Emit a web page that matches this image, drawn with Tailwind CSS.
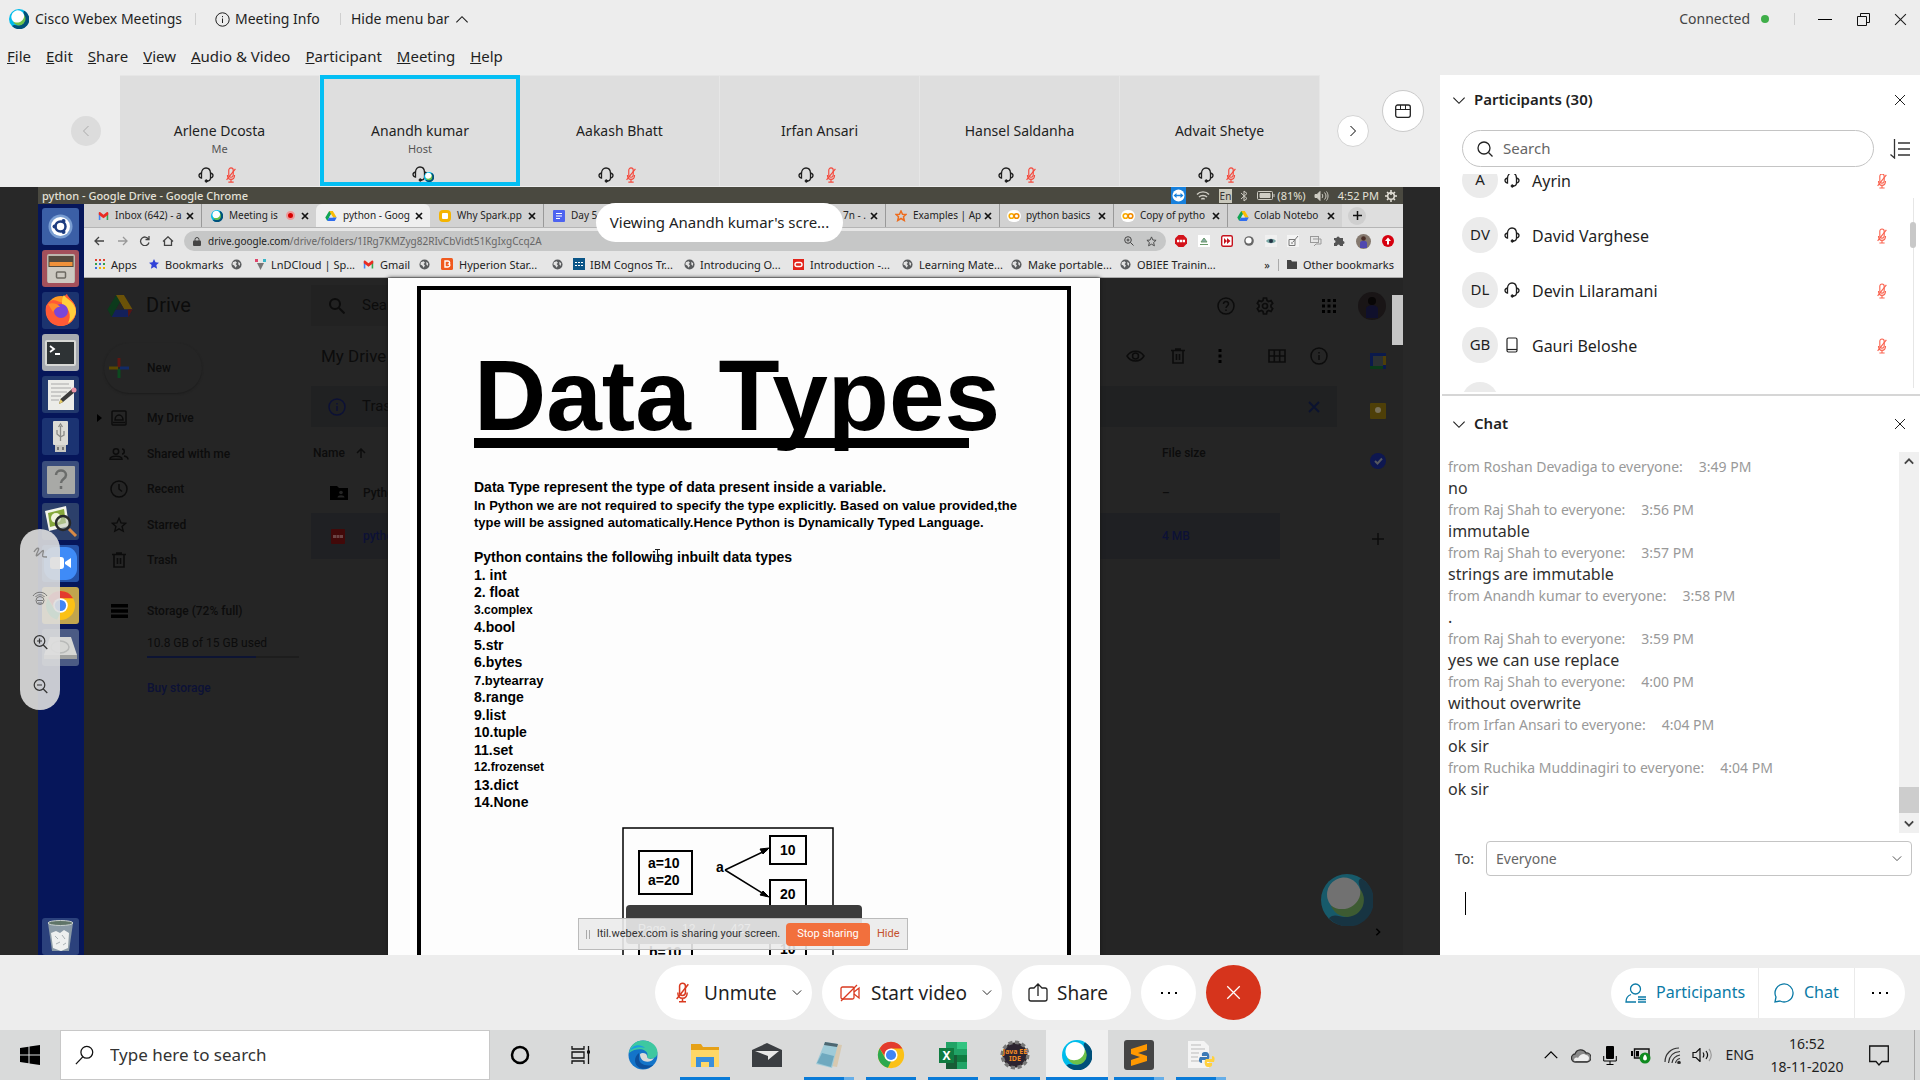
<!DOCTYPE html>
<html lang="en">
<head>
<meta charset="utf-8">
<title>Cisco Webex Meetings</title>
<script src="https://cdn.jsdelivr.net/npm/@tailwindcss/browser@4"></script>
</head>
<body class="flex h-screen flex-col overflow-hidden bg-[#ededed] font-['Noto_Sans','Open_Sans',sans-serif] text-sm text-[#1f1f1f]">

<!-- Shared symbols -->
<svg class="hidden" aria-hidden="true">
  <symbol id="webex" viewBox="0 0 40 40">
    <circle cx="20" cy="20" r="20" fill="#00bceb"/>
    <path d="M31 3.300A20 20 0 1 1 6 34C10 30 14 33 18 33C28 33 33 25 31 14C30 9 27 5 31 3.300Z" fill="#00507a"/>
    <circle cx="20" cy="20" r="13" fill="#6cc04a"/>
    <path d="M30 11.700A13 13 0 1 0 7.600 24C12 28 20 28 25 24C29 21 31 16 30 11.700Z" fill="#fff"/>
  </symbol>
  <symbol id="headset" viewBox="0 0 16 16" fill="none" stroke="currentColor">
    <path d="M3.500 6.500C3.500 3 5.500 1 8 1s4.500 2 4.500 5.500M3.500 6C1.500 6.500 1 7.500 1 8.500s.5 2 2.500 2.500zM12.500 6c2 .5 2.500 1.500 2.500 2.500s-.5 2-2.500 2.500zM12.500 11c0 2-1.500 3-3.500 3" stroke-width="1.300"/>
    <circle cx="8.300" cy="14" r="1.200" fill="currentColor"/>
  </symbol>
  <symbol id="micoff" viewBox="0 0 16 18" fill="none" stroke="currentColor" stroke-width="1.300">
    <rect x="5.500" y="1" width="5" height="10.500" rx="2.500"/>
    <path d="M4 9c0 3 1.500 5 4 5s4-2 4-5M8 14v3M5 17h6M13 2L3 14.500"/>
  </symbol>
  <symbol id="globe" viewBox="0 0 12 12">
    <circle cx="6" cy="6" r="5.500" fill="#5a5c5e"/>
    <path d="M2 3.500l3-1 1.500 1.500L5 5.500 6.500 7 5 9.500 3.500 7 1.500 6zM8 3l2 1.500-.5 3L8 6z" fill="#e3e3e3"/>
  </symbol>
  <symbol id="gmail" viewBox="0 0 14 12">
    <path d="M1 11V2l2 1.500V11z" fill="#4285f4"/><path d="M13 11V2l-2 1.500V11z" fill="#34a853"/>
    <path d="M1 2c0-1 1-1.500 2-.8l4 3.300 4-3.300c1-.7 2-.2 2 .8v2.500L7 9 1 4.500z" fill="#ea2c22"/>
  </symbol>
  <symbol id="gdrive" viewBox="0 0 32 28">
    <path d="M11 0h10L10.500 19 5.500 28 0 18.500z" fill="#11a453"/><path d="M11 0h10l11 18.500H21.500z" fill="#fbbc04"/>
    <path d="M5.500 28L10.500 18.500H32L26.500 28z" fill="#2f6df0"/><path d="M16 9.200l5.400 9.300H10.600z" fill="#e5e5e5"/>
  </symbol>
  <symbol id="gdrive-dim" viewBox="0 0 32 28">
    <path d="M11 0h10L10.500 19 5.500 28 0 18.500z" fill="#0c3a1c"/><path d="M11 0h10l11 18.500H21.500z" fill="#6b5208"/>
    <path d="M5.500 28L10.500 18.500H32L26.500 28z" fill="#13205a"/><path d="M26 18.500h6L26.500 28z" fill="#571512"/><path d="M16 9.200l5.400 9.300H10.600z" fill="#252525"/>
  </symbol>
  <symbol id="chrome" viewBox="0 0 32 32">
    <circle cx="16" cy="16" r="15" fill="#fbc116"/><path d="M3 8.500A15 15 0 0 1 29 8.500H16L10 19z" fill="#e33b2e"/>
    <path d="M3 8.500L9.600 20 16 23l-3.500 7.600A15 15 0 0 1 3 8.500z" fill="#2da94f"/>
    <circle cx="16" cy="16" r="7.500" fill="#fff"/><circle cx="16" cy="16" r="5.800" fill="#4285f4"/>
  </symbol>
  <symbol id="cross" viewBox="0 0 12 12" fill="none" stroke="currentColor"><path d="M1 1l10 10M11 1L1 11"/></symbol>
  <symbol id="cross-bold" viewBox="0 0 8 8" fill="none" stroke="#111" stroke-width="1.700"><path d="M1 1l6 6M7 1L1 7"/></symbol>
  <symbol id="down" viewBox="0 0 12 8" fill="none" stroke="currentColor"><path d="M1 1.500l5 5 5-5"/></symbol>
  <symbol id="down-bold" viewBox="0 0 12 8" fill="none" stroke="currentColor" stroke-width="2.200"><path d="M1 1.500l5 5 5-5"/></symbol>
  <symbol id="colab" viewBox="0 0 14 12"><rect width="14" height="12" rx="6" fill="#fff"/><circle cx="4.500" cy="6" r="2.300" fill="none" stroke="#f9ab00" stroke-width="1.600"/><circle cx="9.500" cy="6" r="2.300" fill="none" stroke="#f28b00" stroke-width="1.600"/></symbol>
</svg>

<!-- Title bar -->
<header class="flex h-[38px] shrink-0 items-center pl-[9px] pr-3">
  <svg class="size-5"><use href="#webex"/></svg>
  <span class="ml-[6px] w-[154px] whitespace-nowrap">Cisco Webex Meetings</span>
  <span class="ml-[6px] h-3 w-px bg-[#cfcfcf]"></span>
  <button class="ml-[19px] flex w-[106px] items-center gap-[5px] whitespace-nowrap">
    <svg class="size-[15px] shrink-0" viewBox="0 0 15 15" fill="none" stroke="currentColor"><circle cx="7.500" cy="7.500" r="6.700"/><path d="M7.500 6.500V11M7.500 4v1.200"/></svg>Meeting Info</button>
  <span class="ml-[19px] h-3 w-px bg-[#cfcfcf]"></span>
  <button class="ml-[10px] flex items-center gap-[6px] whitespace-nowrap">Hide menu bar
    <svg class="h-[9px] w-[14px] rotate-180"><use href="#down"/></svg></button>
  <span class="ml-auto text-[#444]">Connected</span>
  <span class="ml-[11px] size-2 rounded-full bg-[#3fae49]"></span>
  <span class="ml-[25px] h-3 w-px bg-[#cfcfcf]"></span>
  <button aria-label="Minimize" class="ml-[23px] flex h-5 w-[14px] items-center"><span class="h-px w-full bg-black"></span></button>
  <button aria-label="Restore" class="ml-[25px]"><svg class="size-[13px]" viewBox="0 0 13 13" fill="none" stroke="#111"><path d="M.5 3.500h9v9h-9zM3.500 3.500v-3h9v9h-3"/></svg></button>
  <button aria-label="Close window" class="ml-[24px] mr-px"><svg class="size-[13px]"><use href="#cross"/></svg></button>
</header>

<!-- Menu bar -->
<nav class="flex h-[37px] shrink-0 items-center gap-[15px] pl-[7px] text-[15px]">
  <button><u>F</u>ile</button><button><u>E</u>dit</button><button><u>S</u>hare</button><button><u>V</u>iew</button>
  <button><u>A</u>udio &amp; Video</button><button><u>P</u>articipant</button><button><u>M</u>eeting</button><button><u>H</u>elp</button>
</nav>

<main class="flex min-h-0 flex-1">
  <section class="flex min-w-0 flex-1 flex-col">

    <!-- Film strip -->
    <div class="flex h-28 shrink-0 pb-px">
      <div class="flex w-[120px] shrink-0 items-center pl-[71px]">
        <button aria-label="Previous" class="flex size-[30px] items-center justify-center rounded-full bg-[#dcdcdc] text-[#aaa]"><svg class="h-2 w-3 rotate-90"><use href="#down"/></svg></button>
      </div>
      <ul class="flex text-center">
        <li class="flex w-[200px] flex-col items-center border-t border-r border-[#e6e6e6] bg-[#dedede] pt-[45px]">
          <span class="leading-5">Arlene Dcosta</span><span class="h-5 text-[11px] leading-4 text-[#555]">Me</span>
          <span class="flex h-[22px] items-end gap-[9px] pr-[3px]"><svg class="size-4"><use href="#headset"/></svg><svg class="h-4 w-4 text-[#f5493c]"><use href="#micoff"/></svg></span></li>
        <li class="flex w-[200px] flex-col items-center border-4 border-[#04bff4] bg-[#dedede] pt-[42px]">
          <span class="leading-5">Anandh kumar</span><span class="h-5 text-[11px] leading-4 text-[#555]">Host</span>
          <span class="relative flex h-[22px] shrink-0 items-end"><svg class="size-4"><use href="#headset"/></svg><svg class="absolute -right-[6px] bottom-0 size-[10px]"><use href="#webex"/></svg></span></li>
        <li class="flex w-[200px] flex-col items-center border-t border-r border-[#e6e6e6] bg-[#dedede] pt-[45px]">
          <span class="h-10 leading-5">Aakash Bhatt</span>
          <span class="flex h-[22px] items-end gap-[9px] pr-[3px]"><svg class="size-4"><use href="#headset"/></svg><svg class="h-4 w-4 text-[#f5493c]"><use href="#micoff"/></svg></span></li>
        <li class="flex w-[200px] flex-col items-center border-t border-r border-[#e6e6e6] bg-[#dedede] pt-[45px]">
          <span class="h-10 leading-5">Irfan Ansari</span>
          <span class="flex h-[22px] items-end gap-[9px] pr-[3px]"><svg class="size-4"><use href="#headset"/></svg><svg class="h-4 w-4 text-[#f5493c]"><use href="#micoff"/></svg></span></li>
        <li class="flex w-[200px] flex-col items-center border-t border-r border-[#e6e6e6] bg-[#dedede] pt-[45px]">
          <span class="h-10 leading-5">Hansel Saldanha</span>
          <span class="flex h-[22px] items-end gap-[9px] pr-[3px]"><svg class="size-4"><use href="#headset"/></svg><svg class="h-4 w-4 text-[#f5493c]"><use href="#micoff"/></svg></span></li>
        <li class="flex w-[200px] flex-col items-center border-t border-r border-[#e6e6e6] bg-[#dedede] pt-[45px]">
          <span class="h-10 leading-5">Advait Shetye</span>
          <span class="flex h-[22px] items-end gap-[9px] pr-[3px]"><svg class="size-4"><use href="#headset"/></svg><svg class="h-4 w-4 text-[#f5493c]"><use href="#micoff"/></svg></span></li>
      </ul>
      <button aria-label="Next" class="ml-[17px] flex size-8 items-center justify-center self-center rounded-full border border-[#d4d4d4] bg-white text-black"><svg class="h-2 w-3 -rotate-90"><use href="#down"/></svg></button>
      <button aria-label="Layout" class="mt-[15px] ml-[13px] flex size-[42px] items-center justify-center rounded-full border border-[#cacaca] bg-white">
        <svg class="h-[14px] w-4" viewBox="0 0 16 14" fill="none" stroke="#222"><rect x=".7" y="1" width="14.600" height="12.300" rx="2" stroke-width="1.300"/><path d="M1 5.500h14M5.500 1v4.500M10.500 1v4.500"/></svg></button>
    </div>

    <!-- Shared screen -->
    <div class="relative flex min-h-0 flex-1 bg-[#282828] pr-[37px] pl-[38px]">
      <div class="flex min-w-0 flex-1 flex-col overflow-hidden">

        <div class="flex h-[17px] shrink-0 items-center bg-[#4a4940] pr-[6px] pl-1 text-[11px] text-[#e4e1d8]">
          <span class="font-medium whitespace-nowrap">python - Google Drive - Google Chrome</span>
          <svg class="ml-auto h-[17px] w-[15px]" viewBox="0 0 15 17"><rect width="15" height="17" fill="#1780dc"/><circle cx="7.500" cy="8.500" r="6" fill="#fff"/><path d="M2.500 8.500L5.500 6v1.700h4V6l3 2.500-3 2.500V9.300h-4V11z" fill="#1780dc"/></svg>
          <svg class="ml-[10px] h-3 w-[14px]" viewBox="0 0 14 12" fill="none" stroke="#cfcdc4" stroke-width="1.400"><path d="M1 4.500C4 1 10 1 13 4.500M3 7c2-2 6-2 8 0M5.300 9.200c1-.8 2.400-.8 3.400 0"/></svg>
          <span class="ml-[9px] bg-[#c9c8bc] px-px text-[10px] leading-[14px] text-[#333]">En</span>
          <svg class="ml-2 h-3 w-2" viewBox="0 0 8 12" fill="none" stroke="#cfcdc4"><path d="M1 3l6 5.500L4 11V1l3 2.500L1 9"/></svg>
          <svg class="ml-[9px] h-[9px] w-[18px]" viewBox="0 0 18 9" fill="none" stroke="#cfcdc4"><rect x=".5" y=".5" width="15" height="8" rx="1"/><path d="M3 2.500h10v4H3z" fill="#cfcdc4"/><path d="M17 3v3"/></svg>
          <span class="ml-[2px]">(81%)</span>
          <svg class="ml-2 h-[10px] w-[15px]" viewBox="0 0 15 10" fill="none" stroke="#cfcdc4"><path d="M1 3.500h2l3-3v9l-3-3H1z" fill="#cfcdc4"/><path d="M8 3c1 1 1 3 0 4M10.500 1.500c2 2 2 5 0 7M12.500.5c2 2.500 2 6.500 0 9"/></svg>
          <span class="ml-[9px]">4:52 PM</span>
          <svg class="ml-[6px] size-3" viewBox="0 0 12 12" fill="none" stroke="#e4e1d8"><circle cx="6" cy="6" r="3.300" stroke-width="1.500"/><path d="M6 0v5M6 12v-2M0 6h2M12 6h-2M2 2l1.300 1.300M10 2L8.700 3.300M2 10l1.300-1.300M10 10L8.700 8.700" stroke-width="1.500"/></svg>
        </div>

        <div class="flex min-h-0 flex-1">
          <!-- Launcher -->
          <aside class="flex w-[46px] shrink-0 flex-col justify-between bg-[#06165a] pt-1 pl-1">
            <div class="flex h-[458px] flex-col justify-between">
              <svg class="size-[37px]" viewBox="0 0 37 37"><rect width="37" height="37" rx="3" fill="#3b5fa6"/><circle cx="18.500" cy="18.500" r="12" fill="#7a9ed2"/><circle cx="18.500" cy="18.500" r="9.500" fill="#fff"/><circle cx="18.500" cy="18.500" r="5" fill="none" stroke="#1d3c80" stroke-width="2.500"/><circle cx="12.500" cy="18.500" r="2" fill="#1d3c80"/><circle cx="21.500" cy="13" r="2" fill="#1d3c80"/><circle cx="21.500" cy="24" r="2" fill="#1d3c80"/></svg>
              <svg class="size-[37px]" viewBox="0 0 37 37"><rect width="37" height="37" rx="3" fill="#a3505b"/><rect x="5" y="4" width="28" height="29" rx="2" fill="#bcb6ac"/><rect x="6.500" y="6" width="25" height="11" fill="#544a3e"/><rect x="7.500" y="12" width="23" height="4" fill="#f0913a"/><rect x="6" y="17" width="26" height="16" rx="1" fill="#cdc9c1"/><rect x="14.500" y="22" width="9" height="6" rx="1" fill="none" stroke="#6d6962" stroke-width="1.500"/></svg>
              <svg class="size-[37px]" viewBox="0 0 37 37"><rect width="37" height="37" rx="3" fill="#1b336f"/><circle cx="19" cy="19" r="15" fill="#ff9a23"/><path d="M4 14c2-3 3-5 7-6 4 0 7 3 11 3-2-3 0-7 3-9 1 4 9 8 9 17 0 10-9 16-17 15C8 33 2 25 4 14z" fill="#ff5a36"/><path d="M22 3c2 4 12 7 12 17-1 5-4 9-8 11 4-7 1-16-6-19 0-4 0-6 2-9z" fill="#ffcf3c"/><circle cx="19" cy="19" r="7" fill="#7a46d8"/><path d="M6 12c5-2 10 0 12 3-4 0-5 2-7 5z" fill="#ff8a2a"/></svg>
              <svg class="size-[37px]" viewBox="0 0 37 37"><rect width="37" height="37" rx="3" fill="#a6aab0"/><rect x="3" y="6" width="31" height="26" rx="2" fill="#d7d8d5"/><rect x="5" y="8" width="27" height="22" fill="#2e3335"/><path d="M8 12l4 3-4 3M13 20h5" fill="none" stroke="#fff" stroke-width="1.800"/></svg>
              <svg class="size-[37px]" viewBox="0 0 37 37"><rect width="37" height="37" rx="3" fill="#22396d"/><rect x="6" y="4" width="26" height="30" fill="#ecece8"/><path d="M9 8h18M9 12h20M9 16h16M9 20h10M9 24h8" stroke="#a8a8a8"/><path d="M17 28l1.500-5L30 13l3 3-12 10z" fill="#3b3b3b"/><path d="M17 28l1.500-5 2.500 3z" fill="#e9cf6a"/><circle cx="32" cy="14" r="2.500" fill="#e792a4"/></svg>
              <svg class="size-[37px]" viewBox="0 0 37 37"><rect width="37" height="37" rx="3" fill="#1b3372"/><rect x="11" y="3" width="15" height="24" rx="1" fill="#dddcd6"/><rect x="13" y="27" width="11" height="7" fill="#c7c6c0"/><path d="M18.500 23V8M15 12v4l3.500 3 3.500-2v-4M16.500 9l2-3 2 3" fill="none" stroke="#8b8b88" stroke-width="1.300"/><path d="M15 29h2v3h-2zM20 29h2v3h-2z" fill="#777"/></svg>
              <svg class="size-[37px]" viewBox="0 0 37 37"><rect width="37" height="37" rx="3" fill="#3a4d7c"/><rect x="5" y="5" width="28" height="28" rx="1" fill="#a8a9a6"/><path d="M14 14c0-6 10-6 10 0 0 4-5 4-5 8M19 25v3" fill="none" stroke="#6b6d6b" stroke-width="2.500"/></svg>
              <svg class="size-[37px]" viewBox="0 0 37 37"><rect width="37" height="37" rx="3" fill="#2c406b"/><path d="M3 8l21-5 3 20-20 5z" fill="#f3f4ea"/><path d="M6 10l16-4 2 14-16 4z" fill="#86a83c"/><circle cx="14" cy="15" r="5" fill="#f1f3dc"/><circle cx="21" cy="20" r="7" fill="#c7d0bb" fill-opacity=".6" stroke="#26292a" stroke-width="2.500"/><path d="M27 26l7 7" stroke="#d98a45" stroke-width="3"/></svg>
              <svg class="size-[37px]" viewBox="0 0 37 37"><rect width="37" height="37" rx="3" fill="#2552a6"/><rect x="2" y="2" width="33" height="33" rx="11" fill="#3f8bf7"/><rect x="8" y="12" width="14" height="12" rx="3" fill="#fff"/><path d="M23 17l6-4v10l-6-4z" fill="#fff"/></svg>
              <svg class="size-[37px]" viewBox="0 0 37 37"><rect width="37" height="37" rx="3" fill="#c1a54e"/><use href="#chrome" x="3" y="3" width="31" height="31"/></svg>
              <svg class="size-[37px]" viewBox="0 0 37 37"><rect width="37" height="37" rx="3" fill="#4b5b84"/><path d="M8 8h21l6 18H2z" fill="#d6d7d4"/><path d="M2 26h33v4H2z" fill="#9fa19f"/><ellipse cx="18" cy="18" rx="9" ry="6" fill="none" stroke="#b8bab8" stroke-width="1.500"/></svg>
            </div>
            <svg class="size-[37px]" viewBox="0 0 37 37"><rect width="37" height="37" rx="3" fill="#2b417c"/><path d="M6 5h25l-4 28H10z" fill="#8a9aa6"/><ellipse cx="18.500" cy="5" rx="12.500" ry="2.500" fill="#5f7468" stroke="#c9d0cf"/><path d="M9 15l5-2 4 2 4-3 5 3-1 15-7 3-8-3z" fill="#eef0ef"/><path d="M13 18l3 3M20 17l3 4M14 26l4-2M21 27l3-2" stroke="#a9b1b4"/></svg>
          </aside>

          <!-- Browser -->
          <div class="flex min-w-0 flex-1 flex-col">
            <div class="flex h-[23px] shrink-0 items-stretch bg-[#d2d2d2] pl-1 text-[10px] whitespace-nowrap text-[#222]">
              <div class="flex w-[114px] shrink-0 items-center border-r border-[#999] pr-[7px] pl-[10px]"><svg class="h-3 w-[11px] shrink-0"><use href="#gmail"/></svg><span class="ml-[6px] flex-1">Inbox (642) - a</span><svg class="size-2 shrink-0"><use href="#cross-bold"/></svg></div>
              <div class="flex w-[114px] shrink-0 items-center pr-[7px] pl-[9px]"><svg class="size-3 shrink-0"><use href="#webex"/></svg><span class="ml-[6px] flex-1">Meeting is</span><span class="size-[9px] rounded-full border-2 border-[#e99] bg-[#d60000]"></span><svg class="ml-[6px] size-2 shrink-0"><use href="#cross-bold"/></svg></div>
              <div class="flex w-[114px] shrink-0 items-center rounded-t-md bg-[#efefef] pr-[7px] pl-[9px]"><svg class="h-[10px] w-3 shrink-0"><use href="#gdrive"/></svg><span class="ml-[6px] flex-1">python - Goog</span><svg class="size-2 shrink-0"><use href="#cross-bold"/></svg></div>
              <div class="flex w-[114px] shrink-0 items-center border-r border-[#999] pr-[7px] pl-[9px]"><span class="size-3 shrink-0 rounded-sm border-[3px] border-[#f4b400] bg-white"></span><span class="ml-[6px] flex-1">Why Spark.pp</span><svg class="size-2 shrink-0"><use href="#cross-bold"/></svg></div>
              <div class="flex w-[114px] shrink-0 items-center border-r border-[#999] pr-[7px] pl-[9px]"><svg class="size-3 shrink-0" viewBox="0 0 12 12"><rect width="12" height="12" rx="1" fill="#4d63f0"/><path d="M3 3.500h6M3 6h6M3 8.500h4" stroke="#fff"/></svg><span class="ml-[6px] flex-1">Day 5</span><svg class="size-2 shrink-0"><use href="#cross-bold"/></svg></div>
              <div class="w-[114px] shrink-0 border-r border-[#999]"></div>
              <div class="flex w-[114px] shrink-0 items-center border-r border-[#999] pr-[7px] pl-[9px]"><span class="mr-1 flex-1 text-right">7n - .</span><svg class="size-2 shrink-0"><use href="#cross-bold"/></svg></div>
              <div class="flex w-[114px] shrink-0 items-center border-r border-[#999] pr-[7px] pl-[9px]"><svg class="size-3 shrink-0" viewBox="0 0 12 12"><path d="M6 1l1.500 3.200 3.500.3-2.500 2.300.8 3.700L6 8.500l-3.300 2 .8-3.700L1 4.500l3.500-.3z" fill="none" stroke="#ee6c1d" stroke-width="1.500"/></svg><span class="ml-[6px] flex-1">Examples | Ap</span><svg class="size-2 shrink-0"><use href="#cross-bold"/></svg></div>
              <div class="flex w-[114px] shrink-0 items-center border-r border-[#999] pr-[7px] pl-[7px]"><svg class="h-3 w-[14px] shrink-0"><use href="#colab"/></svg><span class="ml-[5px] flex-1">python basics</span><svg class="size-2 shrink-0"><use href="#cross-bold"/></svg></div>
              <div class="flex w-[114px] shrink-0 items-center border-r border-[#999] pr-[7px] pl-[7px]"><svg class="h-3 w-[14px] shrink-0"><use href="#colab"/></svg><span class="ml-[5px] flex-1">Copy of pytho</span><svg class="size-2 shrink-0"><use href="#cross-bold"/></svg></div>
              <div class="flex w-[114px] shrink-0 items-center pr-[7px] pl-[9px]"><svg class="h-[10px] w-3 shrink-0"><use href="#gdrive"/></svg><span class="ml-[5px] flex-1">Colab Notebo</span><svg class="size-2 shrink-0"><use href="#cross-bold"/></svg></div>
              <div class="flex flex-1 items-center bg-[#dedede] pl-[6px]"><button aria-label="New tab" class="flex size-[18px] items-center justify-center rounded-full bg-[#cfcfcf]"><svg class="size-[9px]" viewBox="0 0 9 9" stroke="#111" stroke-width="1.500"><path d="M0 4.500h9M4.500 0v9"/></svg></button></div>
            </div>

            <div class="flex h-[27px] shrink-0 items-center border-t border-[#b5b5b5] bg-[#e6e6e6] pr-[9px] pl-[10px]">
              <svg class="h-[10px] w-[82px] shrink-0" viewBox="0 0 82 10" fill="none" stroke="#444" stroke-width="1.300"><path d="M10 5H1M5 1L1 5l4 4"/><path d="M24 5h9M29 1l4 4-4 4" stroke="#999"/><path d="M54.500 3A4.300 4.300 0 1 0 55 6.500M55 0v3.500h-3.500M69 5.500L74 .800l5 4.700M70.500 4.500V9.500h7V4.500"/></svg>
              <div class="ml-2 flex h-5 flex-1 items-center rounded-full bg-[#c6c7c7] px-[9px] text-[10px]">
                <svg class="h-[9px] w-2" viewBox="0 0 8 9"><rect y="3.500" width="8" height="5.500" rx="1" fill="#444"/><path d="M2 4V2.500a2 2 0 0 1 4 0V4" fill="none" stroke="#444"/></svg>
                <span class="ml-[7px] text-[#222]">drive.google.com</span><span class="text-[#666]">/drive/folders/1IRg7KMZyg82RIvCbVidt51KgIxgCcq2A</span>
                <svg class="ml-auto size-[10px]" viewBox="0 0 10 10" fill="none" stroke="#444"><circle cx="4" cy="4" r="3.300"/><path d="M6.500 6.500L9.500 9.500M2.500 4h3M4 2.500v3"/></svg>
                <svg class="ml-3 size-[11px]" viewBox="0 0 12 12" fill="none" stroke="#444"><path d="M6 1l1.500 3.400 3.500.3-2.700 2.400.9 3.600L6 8.900l-3.200 1.800.9-3.600L1 4.700l3.500-.3z"/></svg>
              </div>
              <div class="ml-[9px] flex w-[219px] shrink-0 items-center justify-between">
                <svg class="size-3" viewBox="0 0 12 12"><path d="M3.500 0h5L12 3.500v5L8.500 12h-5L0 8.500v-5z" fill="#d3131b"/><path d="M2 6h8" stroke="#fff" stroke-width="2.500" stroke-dasharray="2.300 .6"/></svg>
                <svg class="size-3" viewBox="0 0 12 12"><rect width="12" height="12" fill="#fff"/><path d="M2 9.500h8M3 7l3-4 3 4z" stroke="#6a9a6a" fill="#8aa"/></svg>
                <svg class="size-3" viewBox="0 0 12 12"><rect x=".7" y=".7" width="10.600" height="10.600" rx="1.500" fill="#fff" stroke="#c5121d" stroke-width="1.400"/><path d="M3 3l3 3-3 3zM6 3l3.500 3L6 9z" fill="#c5121d"/></svg>
                <svg class="size-[10px]" viewBox="0 0 10 10"><circle cx="5" cy="5" r="4.800" fill="#666"/><circle cx="4.600" cy="4.600" r="3" fill="#fff"/></svg>
                <svg class="size-3" viewBox="0 0 12 12"><rect width="12" height="12" fill="#f0f0f0"/><path d="M1 6c2-3 8-3 10 0-2 3-8 3-10 0z" fill="#7aa8a6"/><circle cx="6" cy="6" r="2" fill="#234"/></svg>
                <svg class="size-3" viewBox="0 0 12 12" fill="none" stroke="#777"><rect width="12" height="12" fill="#f4f4f4" stroke="none"/><path d="M2 4.500h6v6H2zM6 7l5-6M4 8h2"/></svg>
                <svg class="size-3" viewBox="0 0 12 12" fill="none" stroke="#999"><rect x=".5" y="1.500" width="8" height="6"/><path d="M3 4h8v5H6l-2 2"/></svg>
                <svg class="size-3" viewBox="0 0 12 12"><path d="M1 3h2.500a1.600 1.600 0 1 1 3.200 0H10v3a1.500 1.500 0 1 1 0 3v2H7a1.500 1.500 0 1 0-3 0H1V8a1.500 1.500 0 1 0 0-3z" fill="#555"/></svg>
                <svg class="size-[15px]" viewBox="0 0 15 15"><circle cx="7.500" cy="7.500" r="7.500" fill="#85796f"/><circle cx="7.500" cy="4.500" r="2.300" fill="#4a2e28"/><path d="M4 14V9c0-3 7-3 7 0v5z" fill="#5048b0"/></svg>
                <svg class="size-3" viewBox="0 0 12 12"><circle cx="6" cy="6" r="6" fill="#d6000f"/><path d="M6 2.500L9 6H7v3.500H5V6H3z" fill="#fff"/></svg>
              </div>
            </div>

            <div class="flex h-6 shrink-0 items-center border-b border-[#aaa] bg-[#e6e6e6] pr-[9px] pb-[2px] pl-[11px] text-[11px] whitespace-nowrap text-[#222]">
              <a href="#" class="flex w-[54px] shrink-0 items-center gap-[6px]"><svg class="size-[10px]" viewBox="0 0 10 10"><path d="M0 0h2v2H0zM4 0h2v2H4zM8 0h2v2H8z" fill="#e0402f"/><path d="M0 4h2v2H0zM8 4h2v2H8z" fill="#2f9e4a"/><path d="M4 4h2v2H4zM0 8h2v2H0z" fill="#3a6fe0"/><path d="M4 8h2v2H4zM8 8h2v2H8z" fill="#f0b400"/></svg>Apps</a>
              <a href="#" class="flex w-[82px] shrink-0 items-center gap-[6px]"><svg class="size-[10px]" viewBox="0 0 12 12"><path d="M6 0l1.800 4 4.200.5-3.200 2.800.9 4.400L6 9.500l-3.700 2.200.9-4.400L0 4.500 4.200 4z" fill="#3142d8"/></svg>Bookmarks</a>
              <a href="#" aria-label="Bookmark" class="w-6 shrink-0"><svg class="size-[11px]"><use href="#globe"/></svg></a>
              <a href="#" class="flex w-[108px] shrink-0 items-center gap-[5px]"><svg class="size-[11px]" viewBox="0 0 11 11"><path d="M0 0h3v3H0z" fill="#e0456b"/><path d="M8 0h3v3H8z" fill="#39b6c9"/><path d="M2 4h7L5.500 11z" fill="#777"/></svg>LnDCloud | Sp...</a>
              <a href="#" class="flex w-14 shrink-0 items-center gap-[6px]"><svg class="h-[11px] w-[11px]"><use href="#gmail"/></svg>Gmail</a>
              <a href="#" aria-label="Bookmark" class="w-[22px] shrink-0"><svg class="size-[11px]"><use href="#globe"/></svg></a>
              <a href="#" class="flex w-[111px] shrink-0 items-center gap-[6px]"><svg class="size-[12px]" viewBox="0 0 12 12"><rect width="12" height="12" rx="1.500" fill="#f0591e"/><path d="M4 3h3c2 0 2 2.500 1 3 1.500.5 1 3-1 3H4z" fill="none" stroke="#fff" stroke-width="1.400"/></svg>Hyperion Star...</a>
              <a href="#" aria-label="Bookmark" class="w-[21px] shrink-0"><svg class="size-[11px]"><use href="#globe"/></svg></a>
              <a href="#" class="flex w-[111px] shrink-0 items-center gap-[5px]"><svg class="size-[12px]" viewBox="0 0 12 12"><rect width="12" height="12" fill="#0a5587"/><path d="M2 4.500h8M2 7.500h8" stroke="#fff" stroke-dasharray="2 1"/></svg>IBM Cognos Tr...</a>
              <a href="#" class="flex w-[109px] shrink-0 items-center gap-[5px]"><svg class="size-[11px]"><use href="#globe"/></svg>Introducing O...</a>
              <a href="#" class="flex w-[109px] shrink-0 items-center gap-[6px]"><svg class="size-[11px]" viewBox="0 0 11 11"><rect width="11" height="11" fill="#e2231a"/><rect x="2" y="3.500" width="7" height="4" rx="2" fill="none" stroke="#fff" stroke-width="1.400"/></svg>Introduction -...</a>
              <a href="#" class="flex w-[109px] shrink-0 items-center gap-[6px]"><svg class="size-[11px]"><use href="#globe"/></svg>Learning Mate...</a>
              <a href="#" class="flex w-[109px] shrink-0 items-center gap-[6px]"><svg class="size-[11px]"><use href="#globe"/></svg>Make portable...</a>
              <a href="#" class="flex shrink-0 items-center gap-[6px]"><svg class="size-[11px]"><use href="#globe"/></svg>OBIEE Trainin...</a>
              <span class="mr-2 ml-auto">»</span><span class="mr-2 h-3 w-px bg-[#aaa]"></span>
              <a href="#" class="flex items-center gap-[6px]"><svg class="h-[9px] w-[10px]" viewBox="0 0 10 9"><path d="M0 0h4l1 1.500h5V9H0z" fill="#444"/></svg>Other bookmarks</a>
            </div>

            <!-- Drive, dimmed behind the document preview -->
            <div class="relative flex min-h-0 flex-1 bg-[#252525] font-['Roboto',sans-serif] text-xs font-medium text-[#0c0c0c]">
              <nav class="w-[227px] shrink-0 pl-5">
                <div class="mt-[13px] flex h-[29px] items-center gap-[10px] text-[20px] font-normal"><svg class="h-[22px] w-8"><use href="#gdrive-dim"/></svg>Drive</div>
                <button class="mt-[23px] flex h-[50px] w-[98px] items-center gap-[18px] rounded-full pl-[5px] shadow-[0_1px_2px_#1c1c1c]"><svg class="size-5" viewBox="0 0 20 20" stroke-width="3"><path d="M10 0v9" stroke="#5f1712"/><path d="M10 11v9" stroke="#0d4a20"/><path d="M0 10h9" stroke="#5a4800"/><path d="M11 10h9" stroke="#122a66"/></svg>New</button>
                <ul class="mt-[7px]">
                  <li class="flex h-9 items-center"><svg class="mr-[7px] -ml-[7px] h-2 w-[5px]" viewBox="0 0 5 8"><path d="M0 0l5 4-5 4z"/></svg><svg class="mr-5 ml-[2px] size-4" viewBox="0 0 16 16" fill="none" stroke="#0c0c0c" stroke-width="1.500"><rect x="1" y="1" width="14" height="14" rx="1"/><path d="M4 10c0-3 2-5 4-5s4 2 4 5zM2 12.500h12"/></svg>My Drive</li>
                  <li class="flex h-[35px] items-center pl-[5px]"><svg class="mr-[18px] h-3 w-5" viewBox="0 0 20 12" fill="none" stroke="#0c0c0c" stroke-width="1.500"><circle cx="7" cy="3.500" r="2.700"/><path d="M1 11.200c0-4 12-4 12 0zM13 1c3 0 3 5 0 5M15 8c3 .5 4 1.500 4 3.500"/></svg>Shared with me</li>
                  <li class="flex h-9 items-center pl-[6px]"><svg class="mr-[19px] size-[18px]" viewBox="0 0 18 18" fill="none" stroke="#0c0c0c" stroke-width="1.500"><circle cx="9" cy="9" r="8"/><path d="M9 4v5l3 2.500"/></svg>Recent</li>
                  <li class="flex h-[35px] items-center pl-[7px]"><svg class="mr-5 size-4" viewBox="0 0 12 12" fill="none" stroke="#0c0c0c"><path d="M6 1l1.500 3.400 3.500.3-2.700 2.400.9 3.600L6 8.900l-3.200 1.800.9-3.600L1 4.700l3.500-.3z"/></svg>Starred</li>
                  <li class="flex h-9 items-center pl-[8px]"><svg class="mr-[21px] h-4 w-[14px]" viewBox="0 0 14 16" fill="none" stroke="#0c0c0c" stroke-width="1.600"><path d="M0 2.500h14M4 1h6M2 3v12h10V3M5.500 6v6M8.500 6v6"/></svg>Trash</li>
                  <li class="mt-[15px] flex h-9 items-center pl-[7px]"><svg class="mr-[19px] h-[14px] w-[17px]" viewBox="0 0 17 14"><path d="M0 0h17v3.500H0zM0 5.200h17v3.500H0zM0 10.500h17V14H0z"/></svg>Storage (72% full)</li>
                </ul>
                <div class="pl-[43px]">
                  <p class="mt-1 h-5 leading-5 font-normal">10.8 GB of 15 GB used</p>
                  <div class="mt-[3px] h-[2px] w-[152px] bg-[#1d1d1d]"><div class="h-full w-[72%] bg-[#0d1433]"></div></div>
                  <a href="#" class="mt-5 block leading-5 text-[#0c1136]">Buy storage</a>
                </div>
              </nav>
              <div class="flex min-w-0 flex-1 flex-col">
                <div class="mt-[7px] flex h-[41px] shrink-0 items-center justify-between pr-[17px]">
                  <div class="flex h-full w-[500px] items-center gap-[17px] bg-[#222] pl-[18px] text-[15px] font-normal"><svg class="size-4" viewBox="0 0 16 16" fill="none" stroke="#0c0c0c" stroke-width="2"><circle cx="6" cy="6" r="5"/><path d="M10 10l5.500 5.500"/></svg>Search in Drive</div>
                  <div class="flex items-center">
                    <svg class="size-[18px]" viewBox="0 0 18 18" fill="none" stroke="#0c0c0c" stroke-width="1.500"><circle cx="9" cy="9" r="8"/><path d="M6.500 7c0-3.500 5-3 5 0 0 1.500-2.500 2-2.500 4M9 12.500V14"/></svg>
                    <svg class="ml-[21px] size-[18px]" viewBox="0 0 18 18" fill="none" stroke="#0c0c0c" stroke-width="1.700"><path d="M7.500 1h3l.5 2.500 1.500 1L15 3.500l1.700 2.800L15 8v2l1.700 1.700L15 14.500l-2.500-1-1.500 1-.5 2.500h-3L7 14.500l-1.500-1-2.500 1-1.700-2.800L3 10V8L1.300 6.300 3 3.500l2.500 1L7 3.500z"/><circle cx="9" cy="9" r="2.500"/></svg>
                    <svg class="ml-12 size-[14px]" viewBox="0 0 14 14"><path d="M0 0h3v3H0zM5.500 0h3v3h-3zM11 0h3v3h-3zM0 5.500h3v3H0zM5.500 5.500h3v3h-3zM11 5.500h3v3h-3zM0 11h3v3H0zM5.500 11h3v3h-3zM11 11h3v3h-3z"/></svg>
                  </div>
                </div>
                <div class="flex h-[60px] shrink-0 items-center pr-[25px] pl-[10px] text-[17px] font-normal">My Drive
                  <svg class="ml-auto h-3 w-[19px]" viewBox="0 0 19 12" fill="none" stroke="#0c0c0c" stroke-width="1.500"><path d="M1 6c4-6.500 13-6.500 17 0-4 6.500-13 6.500-17 0z"/><circle cx="9.500" cy="6" r="3"/></svg>
                  <svg class="ml-[26px] h-4 w-[14px]" viewBox="0 0 14 16" fill="none" stroke="#0c0c0c" stroke-width="1.600"><path d="M0 2.500h14M4 1h6M2 3v12h10V3M5.500 6v6M8.500 6v6"/></svg>
                  <svg class="ml-[33px] h-[14px] w-[4px]" viewBox="0 0 4 14"><path d="M.5 0h3v3h-3zM.5 5.500h3v3h-3zM.5 11h3v3h-3z"/></svg>
                  <svg class="ml-[46px] h-[14px] w-[18px]" viewBox="0 0 18 14" fill="none" stroke="#0c0c0c" stroke-width="1.600"><path d="M1 1h16v12H1zM1 7h16M6.300 1v12M11.700 1v12"/></svg>
                  <svg class="ml-6 size-[18px]" viewBox="0 0 18 18" fill="none" stroke="#0c0c0c" stroke-width="1.500"><circle cx="9" cy="9" r="8"/><path d="M9 8v5M9 5v1.500"/></svg>
                </div>
                <div class="mr-4 flex h-[41px] shrink-0 items-center gap-4 bg-[#202122] pr-[17px] pl-[17px] text-[15px] font-normal"><svg class="size-[18px]" viewBox="0 0 18 18" fill="none" stroke="#0c1136" stroke-width="1.500"><circle cx="9" cy="9" r="8"/><path d="M9 8v5M9 5v1.500"/></svg>Trash has changed<svg class="ml-auto size-3" viewBox="0 0 12 12" stroke="#0b1330" stroke-width="1.800"><path d="M1 1l10 10M11 1L1 11"/></svg></div>
                <div class="pt-[6px] pr-[73px]">
                  <table class="w-full text-left">
                    <tr class="h-10"><th class="pl-[2px] font-medium"><span class="flex items-center gap-[11px]">Name<svg class="size-[10px]" viewBox="0 0 10 10" fill="none" stroke="#0c0c0c" stroke-width="1.500"><path d="M5 10V1M1 5l4-4 4 4"/></svg></span></th><th class="w-[118px] font-medium">File size</th></tr>
                    <tr class="h-10"><td class="pl-[19px]"><span class="flex items-center gap-[15px]"><svg class="h-[14px] w-[18px]" viewBox="0 0 18 14"><path d="M0 0h7l2 2h9v12H0z"/><circle cx="11" cy="6.500" r="1.800" fill="#252525"/><path d="M7.500 11.500c0-3 7-3 7 0z" fill="#252525"/></svg>Python</span></td><td>–</td></tr>
                    <tr class="h-[46px] bg-[#1f2023] text-[#0c1136]"><td class="pl-[20px]"><span class="flex items-center gap-[18px]"><svg class="h-[15px] w-[14px]" viewBox="0 0 14 15"><rect width="14" height="15" rx="1" fill="#420909"/><path d="M2 7.500h10" stroke="#6b4444" stroke-width="3" stroke-dasharray="3 .5"/></svg>python</span></td><td>4 MB</td></tr>
                  </table>
                </div>
              </div>
              <aside class="flex w-[50px] shrink-0 flex-col items-center">
                <svg class="mt-[14px] mr-3 size-7" viewBox="0 0 28 28"><circle cx="14" cy="14" r="14" fill="#191516"/><circle cx="14" cy="9" r="4" fill="#080606"/><path d="M8 26V17c0-5 12-5 12 0v9z" fill="#10102c"/></svg>
                <svg class="mt-[33px] size-4" viewBox="0 0 16 16"><path d="M0 0h16v16H0z" fill="#0b1a4c"/><path d="M13 3h3v9h-3z" fill="#4e3f08"/><path d="M0 13h13v3H0z" fill="#0b3a19"/><path d="M3 3h10v10H3z" fill="#2c3133"/></svg>
                <svg class="mt-[34px] size-4" viewBox="0 0 16 16"><rect width="16" height="16" rx="1" fill="#4e3f08"/><circle cx="8" cy="7" r="3" fill="#77705a"/></svg>
                <svg class="mt-[34px] size-4" viewBox="0 0 16 16"><circle cx="8" cy="8" r="8" fill="#0e1750"/><path d="M5 8l2.500 2.500L12 5.500" stroke="#56585f" stroke-width="2" fill="none"/></svg>
                <svg class="mt-[64px] size-3" viewBox="0 0 12 12" stroke="#0c0c0c" stroke-width="1.500"><path d="M0 6h12M6 0v12"/></svg>
                <svg class="mt-auto mb-5 h-[6px] w-2 -rotate-90 text-black"><use href="#down-bold"/></svg>
              </aside>
              <span class="absolute top-[17px] right-0 h-[50px] w-[11px] bg-[#c6c6c6]"></span>
              <svg class="absolute right-[30px] bottom-[29px] size-[52px] opacity-35"><use href="#webex"/></svg>

              <!-- Document page -->
              <article class="absolute inset-y-0 left-[304px] w-[712px] overflow-hidden bg-[#fdfdfd] px-[29px] pt-2 font-['Liberation_Sans',Arial,sans-serif] font-bold text-black shadow-[0_0_4px_#161616]">
                <div class="h-[800px] border-4 border-black pl-[53px]">
                  <h1 class="mt-[47px] h-[101px] text-[100px] leading-[117px] whitespace-nowrap">Data Types</h1>
                  <div class="h-[10px] w-[495px] bg-black"></div>
                  <div class="mt-[31px] flex h-[332px] flex-col justify-between text-[14px] leading-[17px] whitespace-nowrap">
                    <p>Data Type represent the type of data present inside a variable.</p>
                    <p class="text-[13px]">In Python we are not required to specify the type explicitly. Based on value provided,the</p>
                    <p class="text-[13px]">type will be assigned automatically.Hence Python is Dynamically Typed Language.</p>
                    <p>&nbsp;</p>
                    <p>Python contains the following inbuilt data types</p>
                    <p>1. int</p><p>2. float</p><p class="text-[12px]">3.complex</p><p>4.bool</p><p>5.str</p><p>6.bytes</p><p class="text-[13px]">7.bytearray</p><p>8.range</p><p>9.list</p><p>10.tuple</p><p>11.set</p><p class="text-[12px]">12.frozenset</p><p>13.dict</p><p>14.None</p>
                  </div>
                  <svg class="mt-[15px] ml-[148px] h-[140px] w-[212px]" viewBox="0 0 212 140" fill="none" stroke="#000" stroke-width="2">
                    <path d="M1 140V2h210v138" stroke-width="1.500"/>
                    <rect x="17" y="25" width="53" height="43"/><rect x="148" y="10" width="36" height="28"/><rect x="148" y="54" width="36" height="28"/>
                    <path d="M103 44l42-20M103 44l42 26" stroke-width="1.500"/><path d="M147 22l-9 1 3 5zM147 71l-9-2 3-4z" fill="#000" stroke-width="1"/>
                    <path d="M17 140v-24h53v24M148 140v-24h36v24"/>
                    <g fill="#000" stroke="none" font-size="14" font-weight="bold"><text x="26" y="42">a=10</text><text x="26" y="59">a=20</text><text x="94" y="46">a</text><text x="158" y="29">10</text><text x="158" y="73">20</text><text x="27" y="131">b=10</text><text x="158" y="128">10</text></g>
                  </svg>
                </div>
                <svg class="absolute top-[271px] left-[266px] h-[13px] w-[7px]" viewBox="0 0 7 13" fill="none" stroke="#222"><path d="M1 .5h5M3.500 0v12M1 12.500h5"/></svg>
                <div class="absolute bottom-[11px] left-[238px] flex h-[39px] w-[236px] items-center gap-4 rounded-sm bg-[#3c3c3c] pt-2 pl-3 text-xs font-normal text-[#ddd]"><span>Page</span><span>12</span><span>/</span><span>427</span></div>
              </article>
            </div>
          </div>
        </div>
      </div>

      <div class="absolute bottom-[5px] left-[578px] flex h-8 w-[330px] items-center border border-[#bbb] bg-[#ebebeb]/90 pl-[7px] font-['Roboto',sans-serif] text-[11px] whitespace-nowrap text-[#333]">
        <span class="h-[9px] w-1 border-x border-[#aaa]"></span><span class="ml-[7px] w-[186px]">ltil.webex.com is sharing your screen.</span>
        <button class="ml-[3px] h-[23px] w-[84px] rounded-sm bg-[#f2703d] text-white">Stop sharing</button>
        <button class="ml-[7px] text-[#c4502c]">Hide</button>
      </div>
      <div class="absolute top-4 left-[596px] flex h-[39px] w-[247px] items-center justify-center rounded-full bg-white text-[15px] whitespace-nowrap text-[#222]">Viewing Anandh kumar's scre...</div>
      <div class="absolute top-[342px] left-5 flex h-[181px] w-10 flex-col items-center justify-between rounded-full bg-[#dedede]/90 pt-[17px] pb-4 text-[#333]">
        <svg class="size-[15px]" viewBox="0 0 15 15" fill="none" stroke="#888" stroke-width="1.300"><path d="M1 6c3-5 6-5 4-1s-3 7 1 3 5-5 4-1-1 4 4 4"/></svg>
        <svg class="size-4" viewBox="0 0 16 16" fill="none" stroke="#777"><path d="M1 6c3-5 11-5 14 0M3.500 7c2-3 7-3 9 0"/><circle cx="8" cy="10.500" r="4"/><path d="M5 10.500h6M6 13h4"/></svg>
        <svg class="size-[15px]" viewBox="0 0 15 15" fill="none" stroke="currentColor" stroke-width="1.200"><circle cx="6.500" cy="6" r="5.300"/><path d="M10.300 10l4 4M4 6h5M6.500 3.500v5"/></svg>
        <svg class="size-[15px]" viewBox="0 0 15 15" fill="none" stroke="currentColor" stroke-width="1.200"><circle cx="6.500" cy="6" r="5.300"/><path d="M10.300 10l4 4M4 6h5"/></svg>
      </div>
    </div>
  </section>

  <!-- Side panel -->
  <aside class="flex w-[480px] shrink-0 flex-col bg-white">
    <div class="flex h-[50px] shrink-0 items-center pr-[14px] pl-3">
      <svg class="h-[9px] w-[14px]"><use href="#down"/></svg><h2 class="ml-2 text-[15px] font-semibold">Participants (30)</h2>
      <button aria-label="Close participants" class="ml-auto"><svg class="size-3"><use href="#cross"/></svg></button>
    </div>
    <div class="mt-[5px] flex h-[37px] shrink-0 items-center pr-[10px] pl-[22px]">
      <label class="flex h-full flex-1 items-center rounded-full border border-[#c4c4c4] pl-[14px]"><svg class="size-4" viewBox="0 0 16 16" fill="none" stroke="#222" stroke-width="1.300"><circle cx="7" cy="7" r="6"/><path d="M11.500 11.500l4 4"/></svg><input aria-label="Search participants" placeholder="Search" class="ml-[10px] flex-1 text-[15px] outline-none placeholder:text-[#666]"></label>
      <button aria-label="Sort" class="ml-4"><svg class="h-5 w-5" viewBox="0 0 20 20" fill="none" stroke="#333"><path d="M4.500 0v19L.5 15.500M8 4h12M8 10h12M8 16h12" stroke-width="1.300"/></svg></button>
    </div>
    <div class="relative mt-[7px] h-[218px] shrink-0 overflow-hidden text-[16px]">
      <ul class="-mt-[22px] pr-[31px] pl-[22px]">
        <li class="flex h-[55px] items-center"><span class="flex size-9 items-center justify-center rounded-full bg-[#ebebeb] text-[15px]">A</span><svg class="ml-[6px] size-4"><use href="#headset"/></svg><span class="ml-3 flex-1 pt-[3px]">Ayrin</span><svg class="mt-[2px] h-4 w-[14px] text-[#fa6450]"><use href="#micoff"/></svg></li>
        <li class="flex h-[55px] items-center"><span class="flex size-9 items-center justify-center rounded-full bg-[#ebebeb] text-[15px]">DV</span><svg class="ml-[6px] size-4"><use href="#headset"/></svg><span class="ml-3 flex-1 pt-[3px]">David Varghese</span><svg class="mt-[2px] h-4 w-[14px] text-[#fa6450]"><use href="#micoff"/></svg></li>
        <li class="flex h-[55px] items-center"><span class="flex size-9 items-center justify-center rounded-full bg-[#ebebeb] text-[15px]">DL</span><svg class="ml-[6px] size-4"><use href="#headset"/></svg><span class="ml-3 flex-1 pt-[3px]">Devin Lilaramani</span><svg class="mt-[2px] h-4 w-[14px] text-[#fa6450]"><use href="#micoff"/></svg></li>
        <li class="flex h-[55px] items-center"><span class="flex size-9 items-center justify-center rounded-full bg-[#ebebeb] text-[15px]">GB</span><svg class="ml-[6px] size-4" viewBox="0 0 16 16" fill="none" stroke="#222" stroke-width="1.200"><rect x="3" y="1" width="10" height="14" rx="1.500"/><path d="M3 12.500h10"/></svg><span class="ml-3 flex-1 pt-[3px]">Gauri Beloshe</span><svg class="mt-[2px] h-4 w-[14px] text-[#fa6450]"><use href="#micoff"/></svg></li>
        <li class="flex h-[55px] items-center"><span class="size-9 rounded-full bg-[#ebebeb]"></span><svg class="ml-[6px] size-4"><use href="#headset"/></svg></li>
      </ul>
      <span class="absolute top-6 right-[6px] h-[190px] w-px bg-[#e6e6e6]"></span>
      <span class="absolute top-12 right-1 h-[26px] w-[6px] rounded-sm bg-[#c8c8c8]"></span>
    </div>
    <div class="mt-[2px] ml-[2px] h-[2px] shrink-0 bg-[#d6d6d6]"></div>
    <div class="flex h-[56px] shrink-0 items-center pr-[14px] pl-3">
      <svg class="h-[9px] w-[14px]"><use href="#down"/></svg><h2 class="ml-2 text-[15px] font-semibold">Chat</h2>
      <button aria-label="Close chat" class="ml-auto"><svg class="size-3"><use href="#cross"/></svg></button>
    </div>
    <div class="flex h-[381px] shrink-0">
      <dl class="flex-1 pt-1 pl-2 text-[16px] text-[#2f2f2f]">
        <dt class="h-[22px] text-sm leading-[22px] text-[#999]">from Roshan Devadiga to everyone:<span class="ml-4">3:49 PM</span></dt><dd class="h-[21px] leading-[21px]">no</dd>
        <dt class="h-[22px] text-sm leading-[22px] text-[#999]">from Raj Shah to everyone:<span class="ml-4">3:56 PM</span></dt><dd class="h-[21px] leading-[21px]">immutable</dd>
        <dt class="h-[22px] text-sm leading-[22px] text-[#999]">from Raj Shah to everyone:<span class="ml-4">3:57 PM</span></dt><dd class="h-[21px] leading-[21px]">strings are immutable</dd>
        <dt class="h-[22px] text-sm leading-[22px] text-[#999]">from Anandh kumar to everyone:<span class="ml-4">3:58 PM</span></dt><dd class="h-[21px] leading-[21px]">.</dd>
        <dt class="h-[22px] text-sm leading-[22px] text-[#999]">from Raj Shah to everyone:<span class="ml-4">3:59 PM</span></dt><dd class="h-[21px] leading-[21px]">yes we can use replace</dd>
        <dt class="h-[22px] text-sm leading-[22px] text-[#999]">from Raj Shah to everyone:<span class="ml-4">4:00 PM</span></dt><dd class="h-[21px] leading-[21px]">without overwrite</dd>
        <dt class="h-[22px] text-sm leading-[22px] text-[#999]">from Irfan Ansari to everyone:<span class="ml-4">4:04 PM</span></dt><dd class="h-[21px] leading-[21px]">ok sir</dd>
        <dt class="h-[22px] text-sm leading-[22px] text-[#999]">from Ruchika Muddinagiri to everyone:<span class="ml-4">4:04 PM</span></dt><dd class="h-[21px] leading-[21px]">ok sir</dd>
      </dl>
      <div class="mr-px flex w-5 flex-col items-center bg-[#f0f0f0] py-[6px] text-[#444]">
        <svg class="h-[7px] w-[10px] rotate-180"><use href="#down-bold"/></svg>
        <span class="mt-auto mb-[7px] h-[26px] w-full bg-[#cdcdcd]"></span>
        <svg class="h-[7px] w-[10px]"><use href="#down-bold"/></svg>
      </div>
    </div>
    <div class="mt-2 flex h-[35px] shrink-0 items-center pr-2 pl-[15px]">
      <label for="to" class="w-[31px] text-[#444]">To:</label>
      <div class="relative flex h-full flex-1"><select id="to" class="h-full w-full appearance-none rounded border border-[#c4c4c4] bg-white pl-[9px] text-[#666]"><option>Everyone</option></select>
        <svg class="pointer-events-none absolute top-[14px] right-[10px] h-[7px] w-[10px] text-[#333]"><use href="#down"/></svg></div>
    </div>
    <div class="relative flex-1"><textarea aria-label="Message" class="h-full w-full resize-none px-6 py-3 outline-none"></textarea><span class="absolute top-4 left-[25px] h-[23px] w-px bg-black"></span></div>
  </aside>
</main>

<!-- Meeting controls -->
<footer class="relative flex h-[75px] shrink-0 items-center pr-[15px] pl-[655px]">
  <div class="flex gap-[10px] text-[19px]">
    <button class="flex h-[55px] w-[157px] items-center rounded-full bg-white pl-[18px]"><svg class="h-[21px] w-[19px] text-[#d93a20]"><use href="#micoff"/></svg><span class="ml-3 w-[72px] pt-[3px] text-left whitespace-nowrap">Unmute</span><svg class="mr-[10px] ml-auto h-[7px] w-[10px] text-black"><use href="#down"/></svg></button>
    <button class="flex h-[55px] w-[180px] items-center rounded-full bg-white pl-[18px]"><svg class="h-[18px] w-5 shrink-0" viewBox="0 0 20 18" fill="none" stroke="#d93a20" stroke-width="1.300"><rect x="1" y="3" width="13" height="12" rx="1.500"/><path d="M14 8l5-4v10l-5-4M1 17L17 1"/></svg><span class="ml-[11px] pt-[3px] text-left whitespace-nowrap">Start video</span><svg class="mr-[10px] ml-auto h-[7px] w-[10px] text-black"><use href="#down"/></svg></button>
    <button class="flex h-[55px] w-[119px] items-center rounded-full bg-white pl-[16px]"><svg class="h-[19px] w-5" viewBox="0 0 20 19" fill="none" stroke="#222" stroke-width="1.300"><path d="M6.500 5H3a2 2 0 0 0-2 2v9a2 2 0 0 0 2 2h14a2 2 0 0 0 2-2V7a2 2 0 0 0-2-2h-3.500M10 13V1M6 5l4-4 4 4"/></svg><span class="ml-[9px] pt-[3px]">Share</span></button>
    <button aria-label="More options" class="flex size-[55px] items-center justify-center gap-[5px] rounded-full bg-white"><span class="size-[2px] bg-black"></span><span class="size-[2px] bg-black"></span><span class="size-[2px] bg-black"></span></button>
    <button aria-label="Leave meeting" class="flex size-[55px] items-center justify-center rounded-full bg-[#d6341c] text-white"><svg class="size-[15px]"><use href="#cross"/></svg></button>
  </div>
  <div class="ml-auto flex h-[50px] overflow-hidden rounded-full bg-white text-[16px] text-[#0a7aa6]">
    <button class="flex w-[148px] items-center border-r border-[#eaeaea] pl-[14px]"><svg class="h-5 w-[21px]" viewBox="0 0 21 20" fill="none" stroke="currentColor" stroke-width="1.300"><circle cx="10.500" cy="6" r="5"/><path d="M11 19H1c0-4 1-6 5-7.500M13 14h8M13 16.500h8M13 19h8"/></svg><span class="ml-[10px]">Participants</span></button>
    <button class="flex w-24 items-center border-r border-[#eaeaea] pl-[15px]"><svg class="size-5" viewBox="0 0 20 20" fill="none" stroke="currentColor" stroke-width="1.300"><path d="M1 19l1-5A9 9 0 1 1 6 18z"/></svg><span class="ml-[10px]">Chat</span></button>
    <button aria-label="More panels" class="flex w-[50px] items-center justify-center gap-[5px]"><span class="size-[2px] bg-black"></span><span class="size-[2px] bg-black"></span><span class="size-[2px] bg-black"></span></button>
  </div>
</footer>

<!-- Taskbar -->
<footer class="flex h-[50px] shrink-0 bg-[#d9dada]">
  <button aria-label="Start" class="flex w-[60px] items-center justify-center"><svg class="size-5" viewBox="0 0 20 20"><path d="M0 3l8.500-1.200V9.500H0zM9.500 1.600L20 0v9.500H9.500zM0 10.500h8.500v7.700L0 17zM9.500 10.500H20V20L9.500 18.400z"/></svg></button>
  <label class="flex w-[430px] items-center border border-[#c8c8c8] bg-white pl-[14px]"><svg class="size-[20px]" viewBox="0 0 22 22" fill="none" stroke="#111" stroke-width="1.400"><circle cx="13" cy="8" r="6.500"/><path d="M8.500 13L1 21"/></svg><input aria-label="Search Windows" placeholder="Type here to search" class="ml-[15px] flex-1 text-[17px] outline-none placeholder:text-[#333]"></label>
  <div class="flex">
    <button aria-label="Cortana" class="flex w-[60px] items-center justify-center"><svg class="size-5" viewBox="0 0 20 20" fill="none" stroke="#000" stroke-width="2.500"><circle cx="10" cy="10" r="8"/></svg></button>
    <button aria-label="Task view" class="flex w-[62px] items-center justify-center"><svg class="size-5" viewBox="0 0 20 20" fill="none" stroke="#111" stroke-width="1.300"><path d="M1 1v3h12V1M1 7h12v6H1zM1 19v-3h12v3M17.500 1v18"/><path d="M16 5.500h3v3h-3z" fill="#111" stroke="none"/></svg></button>
    <button aria-label="Edge" class="flex w-[62px] items-center justify-center"><svg class="size-[30px]" viewBox="0 0 30 30"><circle cx="15" cy="15" r="14.500" fill="#1374c9"/><path d="M1 13C2 5 8 .5 15 .5c8 0 14.500 5 14.500 12 0 5-5 7-9 6-2-.5-1-2-1-4C19 9 9 7 1 13z" fill="#3ec8a0"/><path d="M1 13C3 5 12 3 17 8c-6-2-16 1-16 5z" fill="#1b9de2"/><path d="M11 17c-1 6 5 10 14 8-6 6-17 5-18-4 0-3 1-6 4-8z" fill="#0c4f9c"/><path d="M12 14c2-2 7-1 7 2-.5 3 4 4 7 2-2 5-14 6-14-4z" fill="#d9dada"/></svg></button>
    <button aria-label="File Explorer" class="relative flex w-[62px] items-center justify-center"><svg class="h-[23px] w-7" viewBox="0 0 28 23"><path d="M0 0h10l2 3h16v20H0z" fill="#e6a117"/><path d="M0 6h28v17H0z" fill="#ffd767"/><path d="M5 23v-10h18v10h-5v-5h-8v5z" fill="#3b8fdc"/></svg><span class="absolute inset-x-[6px] bottom-0 h-[3px] bg-[#0a7bd8]"></span></button>
    <button aria-label="Mail" class="flex w-[62px] items-center justify-center"><svg class="h-6 w-[30px]" viewBox="0 0 30 24"><path d="M0 7L15 0l15 7v17H0z" fill="#3b3e42"/><path d="M3 8h24l-11 9v-4z" fill="#e8e8e8"/></svg></button>
    <button aria-label="Notepad" class="relative flex w-[62px] items-center justify-center"><svg class="h-7 w-7" viewBox="0 0 28 28"><path d="M20 3l7 1-5 22-6-1z" fill="#d8c9b0"/><path d="M10 1l13 2-6 24-16-4z" fill="#9fcbd8"/><path d="M10 1l13 2-1 3-13-2z" fill="#4d6670"/><path d="M7 12l12 3-3 11-14-4z" fill="#6fa9bf"/></svg><span class="absolute inset-x-[6px] bottom-0 h-[3px] border-r-[10px] border-[#66aee8] bg-[#0a7bd8]"></span></button>
    <button aria-label="Chrome" class="relative flex w-[62px] items-center justify-center"><svg class="size-7"><use href="#chrome"/></svg><span class="absolute inset-x-[6px] bottom-0 h-[3px] bg-[#0a7bd8]"></span></button>
    <button aria-label="Excel" class="relative flex w-[62px] items-center justify-center"><svg class="h-[27px] w-7" viewBox="0 0 28 27"><path d="M7 0h21v27H7z" fill="#21a366"/><path d="M18 0h10v7H18z" fill="#33c481"/><path d="M7 13h11v14H7z" fill="#185c37"/><path d="M18 13h10v7H18z" fill="#107c41"/><path d="M0 6h15v15H0z" fill="#107c41"/><text x="3.500" y="18" font-size="12" font-weight="bold" fill="#fff">X</text></svg><span class="absolute inset-x-[6px] bottom-0 h-[3px] bg-[#0a7bd8]"></span></button>
    <button aria-label="Eclipse" class="relative flex w-[62px] items-center justify-center"><svg class="size-[30px]" viewBox="0 0 30 30"><circle cx="15" cy="15" r="12.500" fill="#2f2a2c" stroke="#777" stroke-width="4" stroke-dasharray="4 2.500"/><circle cx="15" cy="15" r="11" fill="#2c2430"/><g fill="#f08a24" font-size="7" font-weight="bold" text-anchor="middle"><text x="15" y="14">Java EE</text><text x="15" y="21">IDE</text></g></svg><span class="absolute inset-x-[6px] bottom-0 h-[3px] bg-[#0a7bd8]"></span></button>
    <button aria-label="Webex" class="relative flex w-[62px] items-center justify-center bg-[#f0f0f0]"><svg class="size-[30px]"><use href="#webex"/></svg><span class="absolute inset-x-0 bottom-0 h-[3px] bg-[#0a7bd8]"></span></button>
    <button aria-label="Sublime Text" class="relative flex w-[62px] items-center justify-center"><svg class="size-[30px]" viewBox="0 0 30 30"><rect width="30" height="30" rx="3" fill="#454545"/><path d="M7 9l16-5v6l-9 3 9 3v5L7 26v-6l9-3-9-3z" fill="#ff9800"/></svg><span class="absolute inset-x-[6px] bottom-0 h-[3px] border-r-[10px] border-[#66aee8] bg-[#0a7bd8]"></span></button>
    <button aria-label="Python" class="relative flex w-[62px] items-center justify-center"><svg class="size-7" viewBox="0 0 28 28"><path d="M1 0h16l5 5v22H1z" fill="#f4f4f4"/><path d="M4 4h10M4 8h14M4 12h8M4 16h7M4 20h8" stroke="#bbb"/><path d="M19 11c-5 0-4 2-4 4h5v1h-7c-2 3-1 6 2 6v-3h6c2-1 2-8-2-8z" fill="#3d7ab5"/><path d="M21 26c5 0 4-2 4-4h-5v-1h7c1-3 1-6-2-6v3h-6c-2 1-2 8 2 8z" fill="#ffd140"/></svg><span class="absolute inset-x-[6px] bottom-0 h-[3px] border-r-[10px] border-[#66aee8] bg-[#0a7bd8]"></span></button>
  </div>
  <div class="ml-auto flex items-center">
    <svg class="h-[10px] w-4 rotate-180 text-black"><use href="#down"/></svg>
    <svg class="ml-[12px] h-[15px] w-5" viewBox="0 0 20 15"><path d="M5 14a4 4 0 0 1-1-8 6 6 0 0 1 11-1 4.500 4.500 0 0 1 1 9z" fill="#8a8a8a" stroke="#333" stroke-width="1.300"/><path d="M3 12c0-2 2-3 4-2 2-4 6-5 8-3 2 0 3 2 3 3 0 2-1 3-2 3H5c-1 0-2 0-2-1z" fill="#eee"/></svg>
    <svg class="ml-3 h-[19px] w-[14px]" viewBox="0 0 14 19"><rect x="3" y="0" width="8" height="13" rx="1"/><path d="M.7 10v5h12.600v-5M7 15v3.500M3.500 18.500h7" fill="none" stroke="#000"/></svg>
    <svg class="ml-[14px] h-[18px] w-5" viewBox="0 0 20 18"><path d="M3.500 3H18v9H3.500z" fill="none" stroke="#111" stroke-width="1.400"/><path d="M0 5h2v5H0zM5 5h3v5.500H5z"/><circle cx="14" cy="12" r="5.500" fill="#0f8a1f"/><path d="M14 8.500c3 3 2 6 0 6s-3-3 0-6z" fill="#fff"/></svg>
    <svg class="ml-[13px] size-[17px]" viewBox="0 0 17 17" fill="none" stroke="#333" stroke-width="1.200"><path d="M1 15C1 7 7 1 15 1M4.500 16C5 9 9 5 16 4.500M8 16c.5-4 3-7 8-8M11.500 16c.5-2 2-4 4.500-4.500"/><circle cx="15" cy="15.500" r="1.200" fill="#111"/></svg>
    <svg class="ml-[11px] h-[14px] w-[21px]" viewBox="0 0 21 14" fill="none" stroke="#111" stroke-width="1.200"><path d="M1 4.500h3l4-4v13l-4-4H1zM11 4.500c1 1.500 1 3.500 0 5M14 3c2 2.500 2 5.500 0 8"/><path d="M17 1c3 3.500 3 8.500 0 12" stroke="#999"/></svg>
    <span class="ml-3 text-[14px]">ENG</span>
    <div class="ml-[11px] w-[84px] text-center text-[14px] leading-[23px] whitespace-nowrap"><div>16:52</div><div>18-11-2020</div></div>
    <svg class="ml-5 h-[21px] w-5" viewBox="0 0 20 21" fill="none" stroke="#111" stroke-width="1.300"><path d="M.7 1h18.600v15.500H13L10 20l-3-3.500H.7z"/></svg>
    <span class="mr-[5px] ml-[25px] h-[50px] w-px bg-[#a9a9a9]"></span>
  </div>
</footer>
</body>
</html>
